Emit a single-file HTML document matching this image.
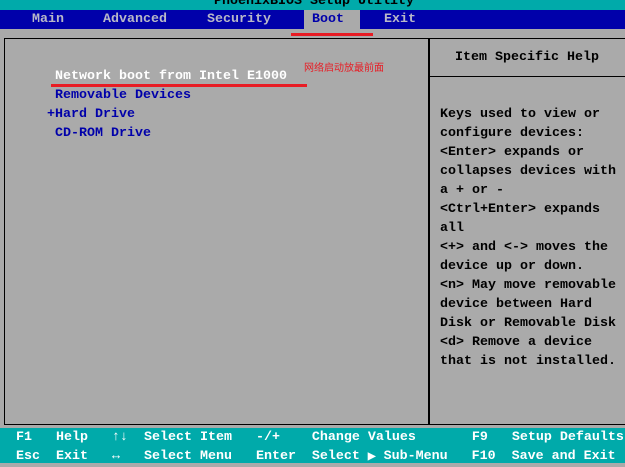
<!DOCTYPE html>
<html><head><meta charset="utf-8"><style>
body{margin:0;width:625px;height:463px;overflow:hidden;background:#aaaaaa;position:relative;font-family:"Liberation Mono",monospace;font-size:13.33px;font-weight:bold}
.a{position:absolute;white-space:pre;line-height:19px}
</style></head><body>
<div class="a" style="left:0;top:0;width:625px;height:10px;background:#00aaaa;overflow:hidden"><div class="a" style="left:214px;top:-8px;color:#000">PhoenixBIOS Setup Utility</div></div>
<div class="a" style="left:0;top:10px;width:625px;height:19px;background:#0000aa"></div>
<div class="a" style="left:304px;top:10px;width:56px;height:19px;background:#aaaaaa"></div>
<div class="a" style="left:32px;top:10px;color:#b8b8c8">Main</div>
<div class="a" style="left:103px;top:10px;color:#b8b8c8">Advanced</div>
<div class="a" style="left:207px;top:10px;color:#b8b8c8">Security</div>
<div class="a" style="left:312px;top:10px;color:#0000aa">Boot</div>
<div class="a" style="left:384px;top:10px;color:#b8b8c8">Exit</div>
<div class="a" style="left:291px;top:33px;width:82px;height:3px;background:#e81c24"></div>
<div class="a" style="left:4px;top:38px;width:622px;height:387px;border:1px solid #000;border-right:none;box-sizing:border-box"></div>
<div class="a" style="left:428px;top:38px;width:2px;height:387px;background:#000"></div>
<div class="a" style="left:429px;top:76px;width:196px;height:1px;background:#000"></div>
<div class="a" style="left:455px;top:48px;color:#000">Item Specific Help</div>
<div class="a" style="left:55px;top:67px;color:#fff">Network boot from Intel E1000</div>
<div class="a" style="left:304px;top:60px;color:#e81c24;font-family:'Noto Sans CJK SC',sans-serif;font-weight:normal;font-size:10px;line-height:14px">网络启动放最前面</div>
<div class="a" style="left:51px;top:84px;width:256px;height:3px;background:#e81c24"></div>
<div class="a" style="left:47px;top:86px;color:#0000aa"> Removable Devices
+Hard Drive
 CD-ROM Drive</div>
<div class="a" style="left:440px;top:105px;color:#000">Keys used to view or
configure devices:
&lt;Enter&gt; expands or
collapses devices with
a + or -
&lt;Ctrl+Enter&gt; expands
all
&lt;+&gt; and &lt;-&gt; moves the
device up or down.
&lt;n&gt; May move removable
device between Hard
Disk or Removable Disk
&lt;d&gt; Remove a device
that is not installed.</div>
<div class="a" style="left:0;top:428px;width:625px;height:35px;background:#00aaaa"></div>
<div class="a" style="left:16px;top:428px;color:#fff">F1   Help   ↑↓  Select Item   -/+    Change Values       F9   Setup Defaults
Esc  Exit   ↔   Select Menu   Enter  Select <span style="font-size:10px">▶</span> Sub-Menu   F10  Save and Exit</div>
</body></html>
